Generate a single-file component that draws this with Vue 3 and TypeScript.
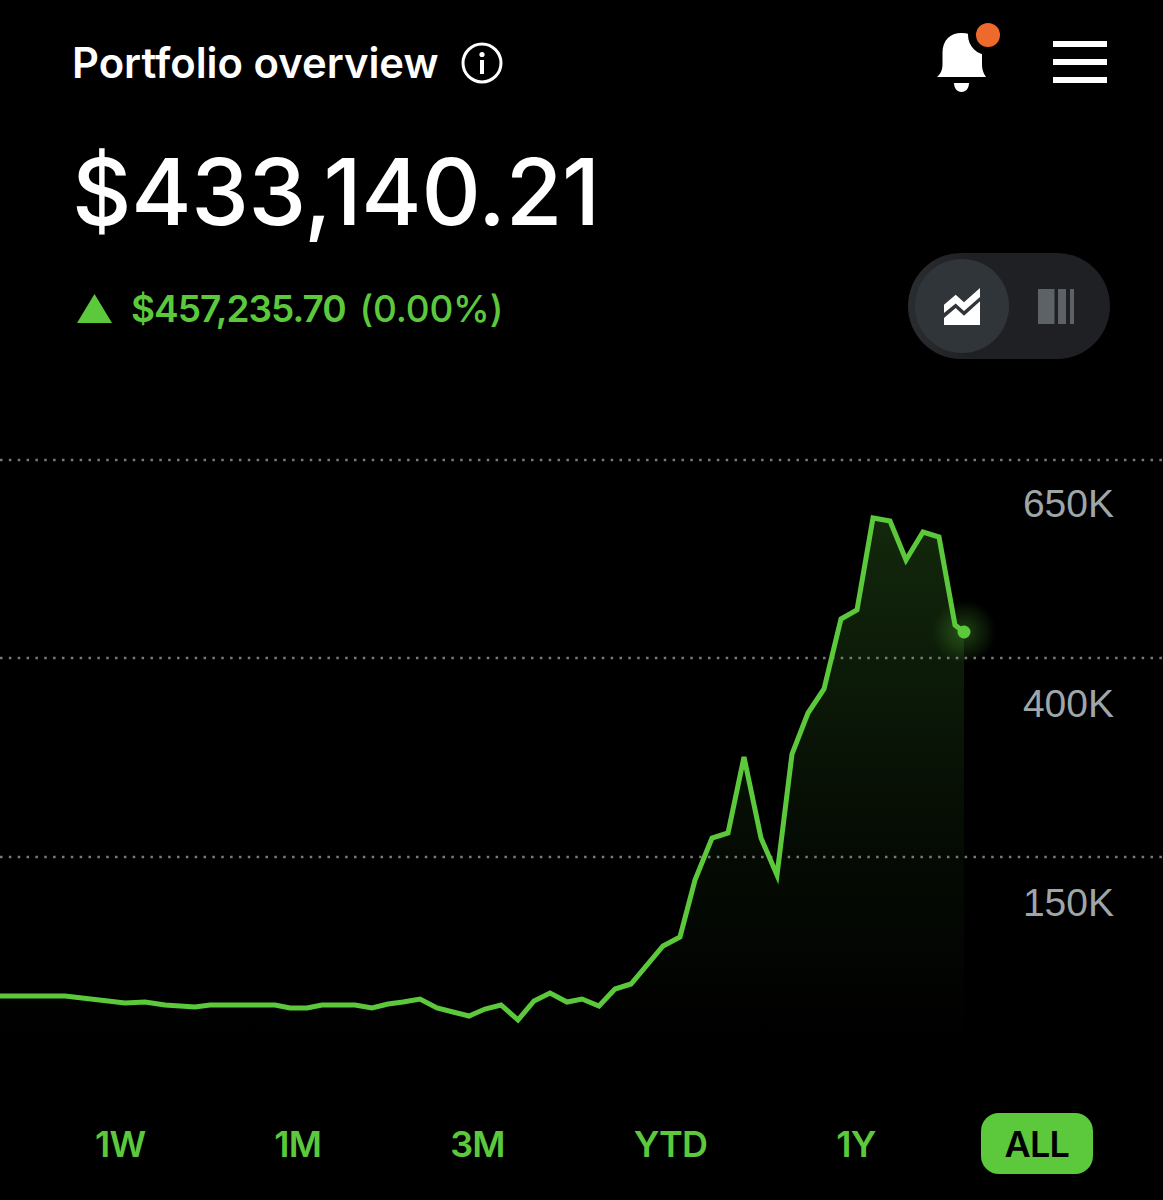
<script setup lang="ts">
import { computed, ref } from 'vue'

const points: [number, number][] = [
  [0, 996], [65, 996], [125, 1003], [145, 1002], [165, 1005], [195, 1007], [210, 1005], [275, 1005],
  [290, 1008], [307, 1008], [322, 1005], [355, 1005], [372, 1008], [388, 1004], [403, 1002], [420, 999],
  [437, 1008], [453, 1012], [469, 1016], [485, 1009], [501, 1005], [518, 1020], [534, 1001], [550, 993],
  [567, 1002], [582, 999], [599, 1006], [615, 989], [631, 984], [663, 946], [680, 937], [695, 880],
  [712, 838], [728, 833], [744, 757], [761, 838], [777, 875], [792, 754], [808, 713], [824, 689],
  [841, 619], [857, 610], [873, 518], [890, 521], [906, 560], [923, 532], [939, 537], [955, 625], [964, 632],
]

const gridLines = [
  { y: 460, label: '650K', baseline: 517 },
  { y: 658, label: '400K', baseline: 717 },
  { y: 857, label: '150K', baseline: 916 },
]

const ranges = ['1W', '1M', '3M', 'YTD', '1Y', 'ALL']
const activeRange = ref('ALL')

const linePoints = computed(() => points.map(([x, y]) => `${x},${y}`).join(' '))
const areaPoints = computed(() => `${linePoints.value} 964,1040 0,1040`)
</script>

<template>
  <div class="screen">
    <header class="top">
      <div class="title-wrap">
        <h1 class="title">Portfolio overview</h1>
        <svg class="info" viewBox="0 0 42 42" aria-hidden="true">
          <circle cx="21" cy="21" r="19" fill="none" stroke="#fff" stroke-width="3" />
          <rect x="19" y="18" width="4" height="14" fill="#fff" />
          <circle cx="21" cy="12.5" r="2.6" fill="#fff" />
        </svg>
      </div>
      <div class="actions">
        <svg class="bell" viewBox="936 22 66 72" aria-hidden="true">
          <path d="M961.5 33C950 33 942.5 40 942.500 53V64C942.500 70 940.500 74 937 77H986C983.500 73 982 70 982 64V53C982 40 973 33 961.500 33Z" fill="#fff" />
          <path d="M954 83H969C969 88 966 92 961.500 92C957 92 954 88 954 83Z" fill="#fff" />
          <circle cx="988" cy="35" r="20" fill="#000" />
          <circle cx="988" cy="35" r="12" fill="#ee6a2c" />
        </svg>
        <div class="menu" aria-label="Menu">
          <span></span>
          <span></span>
          <span></span>
        </div>
      </div>
    </header>

    <section class="summary">
      <div>
        <div class="amount">$433,140.21</div>
        <div class="change">
          <svg class="arrow" viewBox="0 0 35 29" aria-hidden="true">
            <polygon points="17.500,0 35,29 0,29" fill="#5cc93c" />
          </svg>
          <span class="change-value">$457,235.70</span>
          <span class="change-pct">(0.00%)</span>
        </div>
      </div>
      <div class="toggle">
        <div class="toggle-option active">
          <svg viewBox="0 0 36 37" width="36" height="37" aria-hidden="true">
            <polygon points="0,16.700 11.700,6.700 20,14.300 36,0 36,9 20,23 11.700,15.500 0,25" fill="#fff" />
            <polygon points="0,30 11.700,20 20,27.700 36,13.300 36,37 0,37" fill="#fff" />
          </svg>
        </div>
        <div class="toggle-option">
          <svg viewBox="0 0 36 35" width="36" height="35" aria-hidden="true">
            <rect x="0" width="16.500" height="35" fill="#5c6265" />
            <rect x="20" width="8" height="35" fill="#5c6265" />
            <rect x="32" width="4" height="35" fill="#5c6265" />
          </svg>
        </div>
      </div>
    </section>

    <svg class="chart" viewBox="0 440 1163 660">
      <defs>
        <linearGradient id="area" x1="0" y1="518" x2="0" y2="1040" gradientUnits="userSpaceOnUse">
          <stop offset="0" stop-color="#5cc93c" stop-opacity="0.2" />
          <stop offset="0.55" stop-color="#5cc93c" stop-opacity="0.07" />
          <stop offset="1" stop-color="#5cc93c" stop-opacity="0" />
        </linearGradient>
        <radialGradient id="glow">
          <stop offset="0" stop-color="#5cc93c" stop-opacity="0.32" />
          <stop offset="1" stop-color="#5cc93c" stop-opacity="0" />
        </radialGradient>
      </defs>
      <polygon :points="areaPoints" fill="url(#area)" />
      <g v-for="line in gridLines" :key="line.y">
        <line x1="0" x2="1163" :y1="line.y" :y2="line.y" class="grid" />
        <text x="1114" :y="line.baseline" class="tick">{{ line.label }}</text>
      </g>
      <circle cx="964" cy="632" r="32" fill="url(#glow)" />
      <polyline :points="linePoints" class="line" />
      <circle cx="964" cy="632" r="6.500" fill="#5cc93c" />
    </svg>

    <nav class="ranges">
      <button
        v-for="range in ranges"
        :key="range"
        class="range"
        :class="{ active: range === activeRange }"
        @click="activeRange = range"
      >
        {{ range }}
      </button>
    </nav>
  </div>
</template>

<style scoped>
.screen {
  width: 1163px;
  height: 1200px;
  background: #000;
  overflow: hidden;
  font-family: Inter, "Liberation Sans", sans-serif;
}

.top {
  display: flex;
  justify-content: space-between;
  align-items: center;
  height: 126px;
  padding: 0 56px 0 72px;
}

.title-wrap {
  display: flex;
  align-items: center;
  gap: 22px;
}

.title {
  margin: 0;
  font-size: 41.800px;
  font-weight: 600;
  color: #fff;
}

.info {
  width: 42px;
  height: 42px;
}

.actions {
  display: flex;
  align-items: center;
  gap: 51px;
}

.bell {
  width: 66px;
  height: 72px;
  margin-bottom: 10px;
}

.menu {
  display: flex;
  flex-direction: column;
  gap: 12px;
  width: 54px;
  margin-bottom: 2px;
}

.menu span {
  height: 6px;
  background: #fff;
}

.summary {
  display: flex;
  justify-content: space-between;
  align-items: flex-end;
  padding: 0 53px 0 72px;
}

.amount {
  margin-top: 11px;
  font-size: 92px;
  font-weight: 450;
  letter-spacing: -0.300px;
  line-height: 110px;
  color: #fff;
}

.change {
  display: flex;
  align-items: center;
  gap: 14px;
  margin-top: 39px;
  margin-bottom: 29px;
  height: 44px;
  font-size: 37px;
  font-weight: 500;
  letter-spacing: -0.200px;
  color: #5cc93c;
}

.arrow {
  width: 35px;
  height: 29px;
  margin: 0 5px 0 5px;
}

.change-value {
  font-weight: 600;
  letter-spacing: -1px;
}

.toggle {
  display: flex;
  align-items: center;
  width: 202px;
  height: 106px;
  box-sizing: border-box;
  padding: 0 7px;
  border-radius: 53px;
  background: linear-gradient(90deg, #2a2d30, #1f2023 30%);
}

.toggle-option {
  display: flex;
  justify-content: center;
  align-items: center;
  width: 94px;
  height: 94px;
  border-radius: 50%;
}

.toggle-option.active {
  background: #30353a;
}

.chart {
  display: block;
  width: 1163px;
  height: 660px;
  margin-top: 81px;
}

.grid {
  stroke: #7a7a7a;
  stroke-width: 2.500;
  stroke-dasharray: 2.500 6.350;
}

.tick {
  font-family: "Liberation Sans", Arial, sans-serif;
  font-size: 39px;
  fill: #9fa6a9;
  text-anchor: end;
}

.line {
  fill: none;
  stroke: #5cc93c;
  stroke-width: 5;
  stroke-linejoin: miter;
}

.ranges {
  display: flex;
  align-items: center;
  gap: 81px;
  height: 61px;
  margin-top: 13px;
  padding-left: 71px;
}

.range {
  height: 61px;
  padding: 0 24px;
  border: none;
  border-radius: 18px;
  background: transparent;
  font-family: Inter, "Liberation Sans", sans-serif;
  font-size: 36px;
  font-weight: 600;
  letter-spacing: -0.800px;
  color: #5cc93c;
  cursor: pointer;
}

.range.active {
  background: #5cc93c;
  color: #000;
}
</style>

<style>
body {
  background: #000;
}
</style>
